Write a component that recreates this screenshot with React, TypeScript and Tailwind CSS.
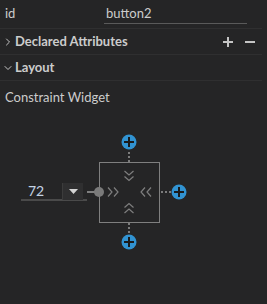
import { ChevronDown, ChevronRight } from "lucide-react";

const font = { fontFamily: 'Lato, "Noto Sans", sans-serif' };

function PlusDot({ cx, cy }: { cx: number; cy: number }) {
  return (
    <g>
      <circle cx={cx} cy={cy} r={7.5} fill="#3193d2" />
      <rect x={cx - 5} y={cy - 1} width={10} height={2} fill="#1b1b1b" />
      <rect x={cx - 1} y={cy - 5} width={2} height={10} fill="#1b1b1b" />
    </g>
  );
}

function ConstraintWidget() {
  // page coords shifted by the widget top (114)
  const o = 114;
  return (
    <div className="relative h-[140px] w-full">
      <svg className="absolute left-0 top-0" width={262} height={140} viewBox={`0 ${o} 262 140`}>
        {/* dotted connectors */}
        <line x1={129} y1={152} x2={129} y2={162} stroke="#7c7c7c" strokeWidth={2} strokeDasharray="2 2" />
        <line x1={161} y1={192} x2={172} y2={192} stroke="#7c7c7c" strokeWidth={2} strokeDasharray="2 2" />
        <line x1={129} y1={223} x2={129} y2={235} stroke="#7c7c7c" strokeWidth={2} strokeDasharray="2 2" />
        {/* box */}
        <rect x={99.5} y={162.5} width={60} height={60} fill="none" stroke="#7f7f7f" strokeWidth={1} />
        {/* left attached constraint */}
        <line x1={87} y1={192} x2={96} y2={192} stroke="#7f7f7f" strokeWidth={2} />
        <circle cx={99} cy={192} r={5} fill="#7a7a7a" />
        {/* chevrons */}
        <g fill="none" stroke="#7e7e7e" strokeWidth={1.2}>
          <polyline points="124.5,171 129,175 133.5,171" />
          <polyline points="124.5,176.5 129,180.5 133.5,176.5" />
          <polyline points="124.5,207.5 129,203.5 133.5,207.5" />
          <polyline points="124.5,213 129,209 133.5,213" />
          <polyline points="108,187.5 112,192 108,196.5" />
          <polyline points="114,187.5 118,192 114,196.5" />
          <polyline points="145,187.5 141,192 145,196.5" />
          <polyline points="151,187.5 147,192 151,196.5" />
        </g>
        <PlusDot cx={129} cy={142} />
        <PlusDot cx={179} cy={192} />
        <PlusDot cx={129} cy={242} />
      </svg>
      {/* margin input */}
      <div className="absolute left-[21px] top-[69px] flex h-[18px] w-[66px] items-center border-b-2 border-[#4a4a4a]">
        <span className="w-[41px] pl-[7px] text-[14px] leading-none text-[#c3d3e3]">72</span>
        <div className="flex h-[17px] w-[21px] items-center justify-center border-l border-[#3c3c3c] bg-[#2f2f30]">
          <svg width={9} height={5} viewBox="0 0 9 5">
            <polygon points="0,0 9,0 4.5,5" fill="#d4d4d4" />
          </svg>
        </div>
      </div>
    </div>
  );
}

export default function App() {
  return (
    <div className="h-[304px] w-[267px] overflow-hidden bg-[#252526] text-[#cccccc]" style={font}>
      <div className="w-[262px]">
        {/* id row */}
        <div className="flex h-[29px] items-center border-b border-[#2f2f30]">
          <span className="w-[104px] pl-[5px] text-[13px]">id</span>
          <div className="flex h-[20px] w-[143px] items-center border-b border-[#5a5a5a] pl-[2px] text-[13px]">button2</div>
        </div>
        {/* declared attributes */}
        <div className="flex h-[26px] items-center border-b border-[#2f2f30]">
          <ChevronRight size={12} strokeWidth={2} className="ml-[2px] text-[#c5c5c5]" />
          <span className="ml-[1px] text-[13px] font-bold">Declared Attributes</span>
          <div className="ml-auto flex items-center gap-[12px] pr-[7px]">
            <svg width={10} height={10} viewBox="0 0 10 10">
              <rect x={0} y={4} width={10} height={2} fill="#c5c5c5" />
              <rect x={4} y={0} width={2} height={10} fill="#c5c5c5" />
            </svg>
            <svg width={10} height={10} viewBox="0 0 10 10">
              <rect x={0} y={4} width={10} height={2} fill="#c5c5c5" />
            </svg>
          </div>
        </div>
        {/* layout */}
        <div className="flex h-[26px] items-center border-b border-[#2f2f30]">
          <ChevronDown size={12} strokeWidth={2} className="ml-[2px] text-[#c5c5c5]" />
          <span className="ml-[1px] text-[13px] font-bold">Layout</span>
        </div>
        <div className="flex h-[33px] items-center pl-[5px] text-[13px]">Constraint Widget</div>
        <ConstraintWidget />
      </div>
    </div>
  );
}
